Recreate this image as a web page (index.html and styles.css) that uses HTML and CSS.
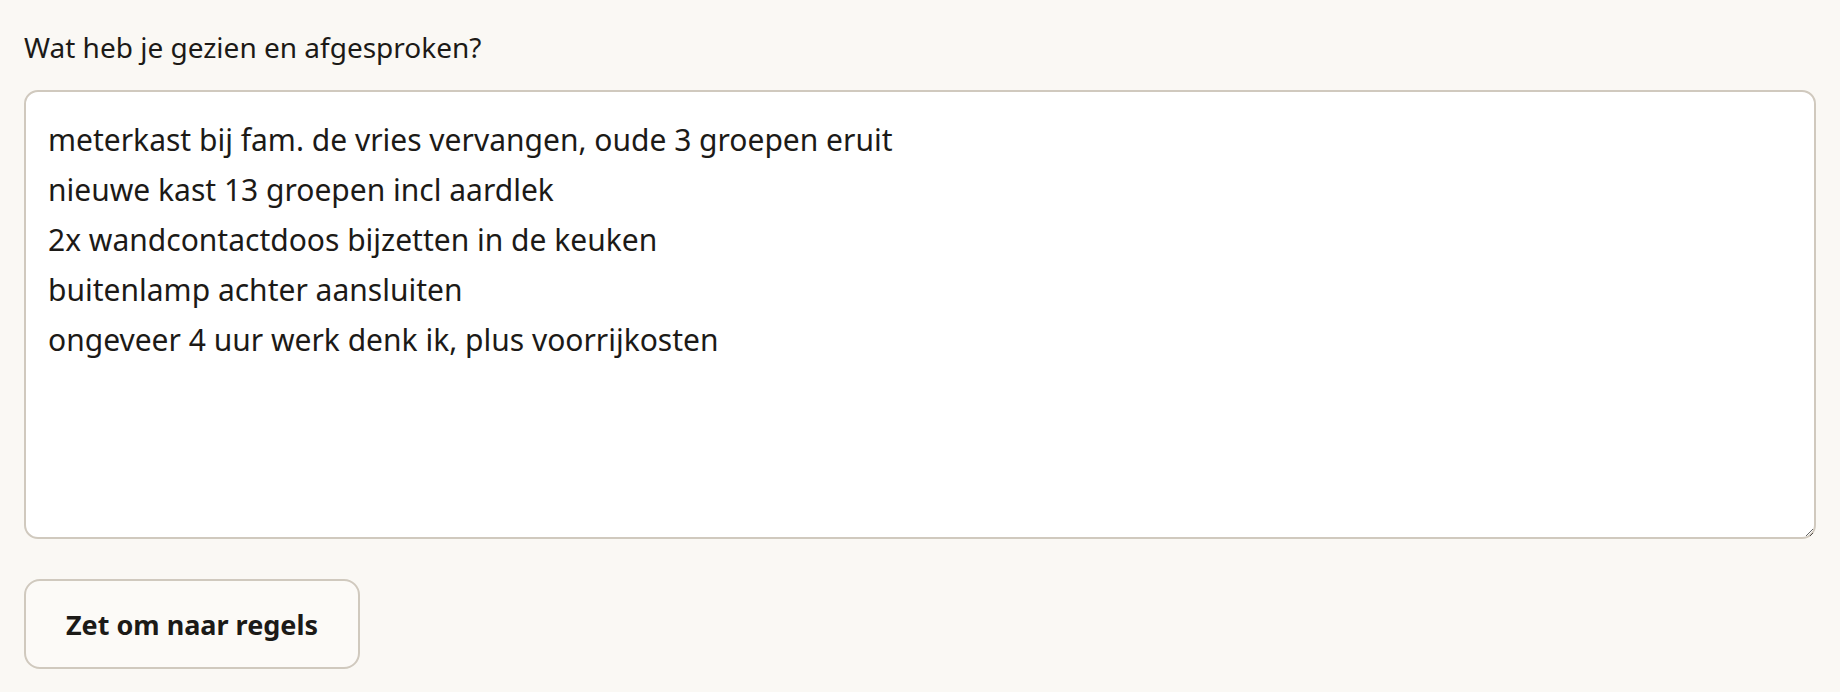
FILE: index.html
```html
<!DOCTYPE html>
<html lang="nl">
<head>
  <meta charset="UTF-8" />
  <meta name="viewport" content="width=device-width, initial-scale=1.0" />
  <title>Werkbon</title>
  <link rel="stylesheet" href="styles.css">
</head>
<body>
  <div class="container">
    <label for="notes" class="field-label">Wat heb je gezien en afgesproken?</label>
    <textarea id="notes" class="notes">meterkast bij fam. de vries vervangen, oude 3 groepen eruit
nieuwe kast 13 groepen incl aardlek
2x wandcontactdoos bijzetten in de keuken
buitenlamp achter aansluiten
ongeveer 4 uur werk denk ik, plus voorrijkosten</textarea>
    <button type="button" class="convert-btn">Zet om naar regels</button>
  </div>
</body>
</html>
```

FILE: styles.css
```css
body {
  font-family: 'Noto Sans', 'Open Sans', sans-serif;
  background-color: #faf8f4;
  color: #1c1a17;
  margin: 0;
  padding: 0;
}

.container {
  padding: 28px 24px 24px;
  display: flex;
  flex-direction: column;
  align-items: flex-start;
}

.field-label {
  font-size: 28px;
  line-height: 38px;
  margin-bottom: 24px;
}

.notes {
  box-sizing: border-box;
  width: 100%;
  height: 449px;
  padding: 23px 22px 21px;
  font-family: inherit;
  font-size: 30px;
  line-height: 50px;
  color: #1c1a17;
  background: #fff;
  border: 2px solid #d0c9be;
  border-radius: 14px;
  outline: none;
  resize: vertical;
}

.convert-btn {
  margin-top: 40px;
  box-sizing: border-box;
  width: 336px;
  height: 90px;
  padding: 0;
  font-family: inherit;
  font-size: 27px;
  font-weight: 700;
  color: #1c1a17;
  background: #fcfaf7;
  border: 2px solid #d0c9be;
  border-radius: 16px;
  cursor: pointer;
}
```
